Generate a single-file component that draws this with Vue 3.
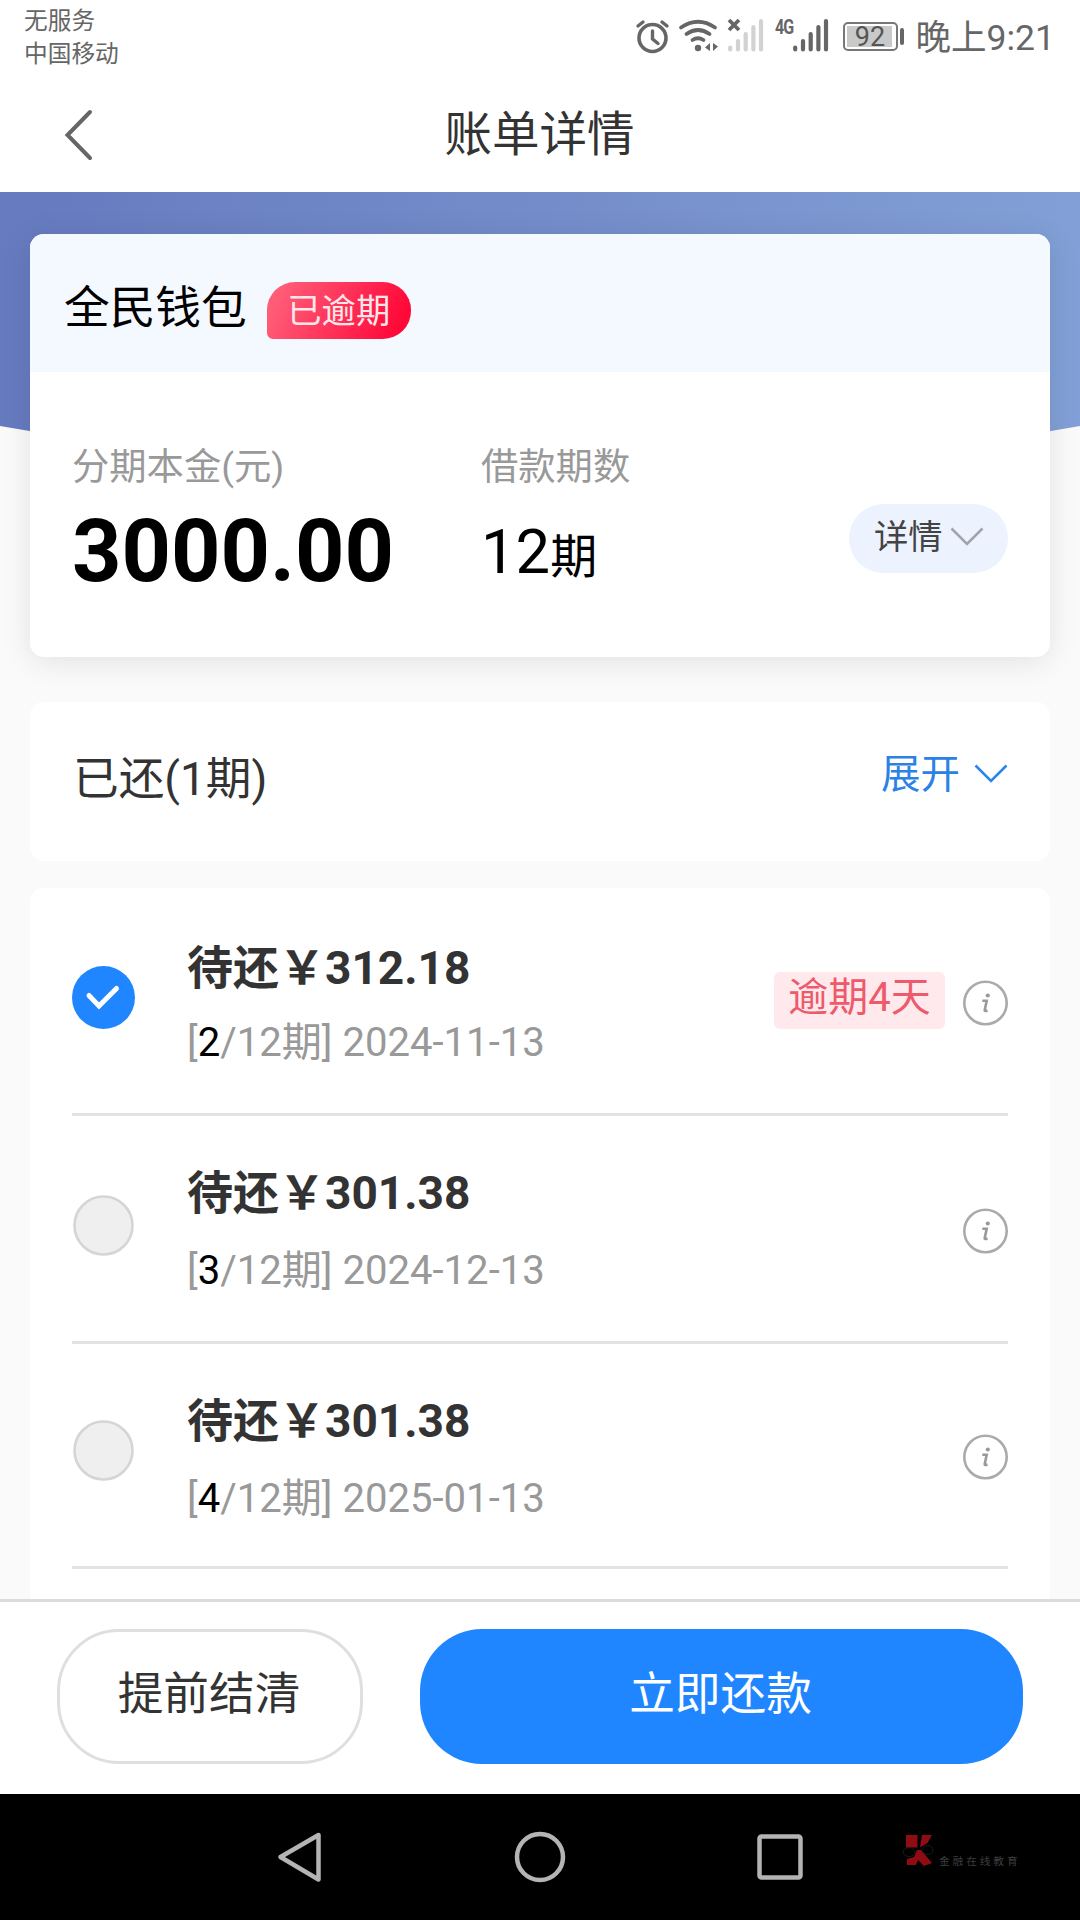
<template>
  <div class="page">
    <header class="status">
      <div class="status__carriers">
        <span>无服务</span>
        <span>中国移动</span>
      </div>
      <div class="status__icons">
        <!-- alarm, wifi and both sim signals -->
        <svg width="204" height="72" viewBox="630 0 204 72" fill="none" stroke="#666" stroke-linecap="round">
          <circle cx="652.5" cy="38" r="13.5" stroke-width="3.6" />
          <path d="M652.5 31v8l5.5 4.5" stroke-width="3.4" />
          <path d="M638 26l5-4M667 26l-5-4" stroke-width="3.4" />
          <path d="M681 27.500q17-11.500 34 0M686.500 34q11.500-8 23 0M692.500 40q5.500-3.500 11 0" stroke-width="3.8" />
          <circle cx="698" cy="48" r="3.2" fill="#666" stroke="none" />
          <path d="M710 43v8l-5-3.500zM713 43v8l5-4.500z" fill="#666" stroke="none" />
          <path d="M729 20l10 10M739 20l-10 10" stroke-width="3.8" stroke-linecap="butt" />
          <path d="M730.200 47.500v2M738 41v8.500M745.700 34v15.500M753.400 27v22.500M761 21v28.500" stroke="#d2d2d2" stroke-width="4.200" />
          <path d="M795.200 47.500v2M803 41v8.500M810.700 34v15.500M818.400 27v22.500M826 21v28.500" stroke-width="4.200" />
          <text x="775" y="34" class="net">4G</text>
        </svg>
        <div class="battery"><span class="battery__level">92</span></div>
        <span class="status__time">晚上9:21</span>
      </div>
    </header>

    <nav class="topbar">
      <svg class="topbar__back" width="32" height="56" viewBox="0 0 32 56" fill="none" stroke="#666" stroke-width="4">
        <path d="M28 5L5.500 28 28 51" stroke-linecap="round" />
      </svg>
      <h1 class="topbar__title">账单详情</h1>
    </nav>

    <main class="content">
      <svg class="banner" width="1080" height="264" viewBox="0 0 1080 264">
        <defs>
          <linearGradient id="bannerFill" x1="0" y1="0" x2="1" y2="0">
            <stop offset="0" stop-color="#667abf" />
            <stop offset="0.5" stop-color="#748dca" />
            <stop offset="1" stop-color="#82a0d7" />
          </linearGradient>
        </defs>
        <path d="M0 0H1080V234Q540 330 0 234Z" fill="url(#bannerFill)" />
      </svg>

      <section class="bill">
        <div class="bill__head">
          <span class="bill__name">全民钱包</span>
          <span class="bill__status">已逾期</span>
        </div>
        <div class="bill__body">
          <div class="bill__principal">
            <div class="bill__label">分期本金(元)</div>
            <div class="bill__amount">3000.00</div>
          </div>
          <div class="bill__terms">
            <div class="bill__label">借款期数</div>
            <div class="bill__count">12<small>期</small></div>
          </div>
          <button type="button" class="bill__more">
            <span>详情</span>
            <svg width="34" height="20" viewBox="0 0 34 20" fill="none" stroke="#a0a4ab" stroke-width="2.6">
              <path d="M1.500 1.500L17 17 32.500 1.500" />
            </svg>
          </button>
        </div>
      </section>

      <section class="repaid">
        <span class="repaid__title">已还(1期)</span>
        <button type="button" class="repaid__toggle">
          <span>展开</span>
          <svg width="34" height="20" viewBox="0 0 34 20" fill="none" stroke="#2b86ea" stroke-width="2.6">
            <path d="M1.500 1.500L17 17 32.500 1.500" />
          </svg>
        </button>
      </section>

      <section class="plan">
        <div v-for="item in items" :key="item.no" class="term">
          <svg class="term__check" width="64" height="64" viewBox="0 0 64 64" fill="none">
            <template v-if="item.checked">
              <circle cx="31.500" cy="31.500" r="31.500" fill="#1f86ff" />
              <path d="M17 29.500L27 40 44.500 22.500" stroke="#fff" stroke-width="5" stroke-linecap="round" />
            </template>
            <circle v-else cx="31.500" cy="31.500" r="29" fill="#efefef" stroke="#d5d5d5" stroke-width="2.600" />
          </svg>
          <div class="term__info">
            <div class="term__amount">待还￥{{ item.amount }}</div>
            <div class="term__date">[<b>{{ item.no }}</b>/12期] {{ item.date }}</div>
          </div>
          <span v-if="item.overdue" class="term__overdue">逾期{{ item.overdue }}天</span>
          <svg class="term__tip" width="45" height="46" viewBox="0.5 0 45 46" fill="none">
            <circle cx="23" cy="23" r="21.200" stroke="#aaa" stroke-width="2.600" />
            <circle cx="25.300" cy="15.500" r="2.100" fill="#999" />
            <path d="M19.800 20.800h4.400l-2 9.200q-.3 1.700 2.800.6" stroke="#999" stroke-width="2.600" />
          </svg>
        </div>
      </section>
    </main>

    <footer class="actions">
      <button type="button" class="btn btn--plain">提前结清</button>
      <button type="button" class="btn btn--primary">立即还款</button>
    </footer>

    <div class="sysnav">
      <svg width="1080" height="126" viewBox="0 0 1080 126" fill="none" stroke="#b4b4b4" stroke-width="4.500">
        <path d="M318.500 41v44.500L280.500 63z" stroke-linejoin="round" />
        <circle cx="540" cy="63" r="23" />
        <rect x="759.500" y="42.500" width="41" height="41" rx="2" />
        <g stroke="none">
          <path d="M906 41h11.500v12.500h-11.500zM922 41h10l-4.500 8-7.500 4.500zM907 65l7-2 3-7h4l11 13-8 3-6-6-2 5h-9z" fill="#8f0c12" />
          <text x="939" y="70.500" class="mark">金融在线教育</text>
        </g>
        <g stroke="#1c1c1c" stroke-width="1">
          <ellipse cx="909" cy="58" rx="6" ry="4.500" />
          <ellipse cx="927.500" cy="56" rx="5.500" ry="4.500" />
        </g>
      </svg>
    </div>
  </div>
</template>

<script setup>
const items = [
  { no: 2, amount: "312.18", date: "2024-11-13", overdue: 4, checked: true },
  { no: 3, amount: "301.38", date: "2024-12-13", overdue: 0, checked: false },
  { no: 4, amount: "301.38", date: "2025-01-13", overdue: 0, checked: false },
];
</script>

<style>
body {
  margin: 0;
  background: #fafafa;
}
</style>

<style scoped>
.page {
  display: flex;
  flex-direction: column;
  width: 1080px;
  height: 1920px;
  overflow: hidden;
  background: #fafafa;
  color: #333;
  font-family: Roboto, "Noto Sans CJK SC", sans-serif;
}
button {
  margin: 0;
  padding: 0;
  border: 0;
  background: none;
  color: inherit;
  font-family: inherit;
}

/* status bar */
.status {
  display: flex;
  justify-content: space-between;
  height: 72px;
  flex: none;
  padding: 0 25px 0 24px;
  background: #fff;
  color: #666;
}
.status__carriers {
  display: flex;
  flex-direction: column;
  padding-top: 5px;
  font-size: 23.7px;
  line-height: 33px;
}
.status__icons {
  display: flex;
  align-items: flex-start;
}
.net {
  fill: #666;
  stroke: none;
  font-size: 20px;
  font-weight: 700;
  letter-spacing: -1px;
  transform-origin: 775px 34px;
  transform: scaleX(0.8);
}
.battery {
  position: relative;
  box-sizing: border-box;
  width: 55px;
  height: 29px;
  margin: 22px 18px 0 9px;
  padding: 2px 4px;
  border: 2px solid #777;
  border-radius: 5px;
}
.battery::after {
  content: "";
  position: absolute;
  top: 4px;
  right: -8px;
  width: 4px;
  height: 17px;
  border-radius: 2px;
  background: #666;
}
.battery__level {
  display: block;
  width: 45px;
  height: 21px;
  margin-left: -2px;
  padding-left: 2px;
  box-sizing: border-box;
  background: #c9c9c9;
  color: #555;
  font-size: 27px;
  line-height: 22px;
  text-align: center;
}
.status__time {
  font-size: 35.5px;
  line-height: 76px;
}

/* title bar */
.topbar {
  display: flex;
  align-items: center;
  height: 120px;
  flex: none;
  background: #fff;
}
.topbar__back {
  margin: 5px 0 0 62px;
}
.topbar__title {
  flex: 1;
  margin: 6px 95px 0 0;
  font-size: 47.5px;
  font-weight: 400;
  line-height: 60px;
  text-align: center;
}

.content {
  position: relative;
  flex: 1;
  min-height: 0;
  padding: 42px 30px 0;
  overflow: hidden;
}
.banner {
  position: absolute;
  top: 0;
  left: 0;
}

/* bill summary */
.bill {
  position: relative;
  height: 423px;
  border-radius: 14px;
  background: #fff;
  box-shadow: 0 4px 30px rgba(0, 0, 0, 0.1);
  overflow: hidden;
}
.bill__head {
  display: flex;
  align-items: flex-start;
  height: 138px;
  padding-left: 34px;
  background: #f4f8ff;
}
.bill__name {
  margin-top: 45px;
  color: #000;
  font-size: 45.7px;
  line-height: 60px;
}
.bill__status {
  width: 144px;
  height: 57px;
  margin: 48px 0 0 20px;
  border-radius: 28px 28px 28px 6px;
  background: linear-gradient(115deg, #ff5c78 10%, #ff0838 90%);
  color: #ffe6ea;
  font-size: 34.3px;
  line-height: 59px;
  text-align: center;
}
.bill__body {
  display: flex;
  align-items: flex-start;
  padding: 70px 42px 0 42px;
}
.bill__principal {
  width: 409px;
}
.bill__terms {
  flex: 1;
}
.bill__label {
  color: #999;
  font-size: 37.3px;
  line-height: 50px;
}
.bill__amount {
  margin-top: 10px;
  color: #000;
  font-size: 86.3px;
  font-weight: 700;
  line-height: 100px;
}
.bill__count {
  margin-top: 10px;
  color: #000;
  font-size: 61.5px;
  line-height: 100px;
}
.bill__count small {
  font-size: 47px;
}
.bill__more {
  display: flex;
  align-items: flex-start;
  width: 159px;
  height: 69px;
  margin-top: 62px;
  padding-left: 25px;
  border-radius: 35px;
  background: #ecf3ff;
  color: #444;
  font-size: 34.3px;
  line-height: 66px;
}
.bill__more svg {
  margin: 23px 0 0 7px;
}

/* repaid periods */
.repaid {
  position: relative;
  display: flex;
  justify-content: space-between;
  height: 159px;
  margin-top: 45px;
  padding: 0 42px 0 43px;
  border-radius: 14px;
  background: #fff;
}
.repaid__title {
  font-size: 45.7px;
  line-height: 155px;
}
.repaid__toggle {
  display: flex;
  align-items: flex-start;
  color: #2b82e4;
  font-size: 39.5px;
  line-height: 146px;
}
.repaid__toggle svg {
  margin: 62px 0 0 14px;
}

/* repayment plan */
.plan {
  position: relative;
  height: 800px;
  margin-top: 27px;
  padding: 0 42px;
  border-radius: 14px;
  background: #fff;
}
.term {
  display: flex;
  align-items: flex-start;
  box-sizing: border-box;
  height: 228px;
  border-bottom: 3px solid #e3e3e3;
}
.term:last-child {
  height: 225px;
}
.term:last-child .term__check,
.term:last-child .term__tip {
  position: relative;
  top: -3px;
}
.term:last-child .term__tip {
  top: -2px;
}
.term__check {
  margin-top: 78px;
}
.term__info {
  flex: 1;
  margin: 47px 0 0 51px;
}
.term:first-child .term__info {
  margin-top: 50px;
}
.term__amount {
  font-size: 46px;
  font-weight: 700;
  line-height: 60px;
}
.term__date {
  margin-top: 18px;
  color: #999;
  font-size: 40.1px;
  line-height: 60px;
}
.term:first-child .term__date {
  margin-top: 15px;
}
.term__date b {
  color: #000;
  font-weight: 400;
}
.term__overdue {
  width: 171px;
  height: 57px;
  margin: 84px 18px 0 0;
  border-radius: 6px;
  background: #ffe9ec;
  color: #ed5a6b;
  font-size: 40px;
  line-height: 52px;
  text-align: center;
}
.term__tip {
  margin-top: 92px;
}

/* bottom buttons */
.actions {
  display: flex;
  gap: 57px;
  box-sizing: border-box;
  height: 195px;
  flex: none;
  padding: 27px 57px 0;
  border-top: 3px solid #dcdcdc;
  background: #fff;
}
.btn {
  box-sizing: border-box;
  height: 135px;
  border-radius: 62px;
  font-size: 45.7px;
}
.btn--plain {
  width: 306px;
  padding: 0 2px 13px 0;
  border: 3px solid #dfdfdf;
  background: #fff;
}
.btn--primary {
  flex: 1;
  padding: 0 2px 13px 0;
  background: #1f86ff;
  color: #fff;
}

.sysnav {
  height: 126px;
  flex: none;
  background: #000;
}
.mark {
  fill: #3d3d3d;
  font-size: 10.7px;
  letter-spacing: 2.900px;
}
</style>
